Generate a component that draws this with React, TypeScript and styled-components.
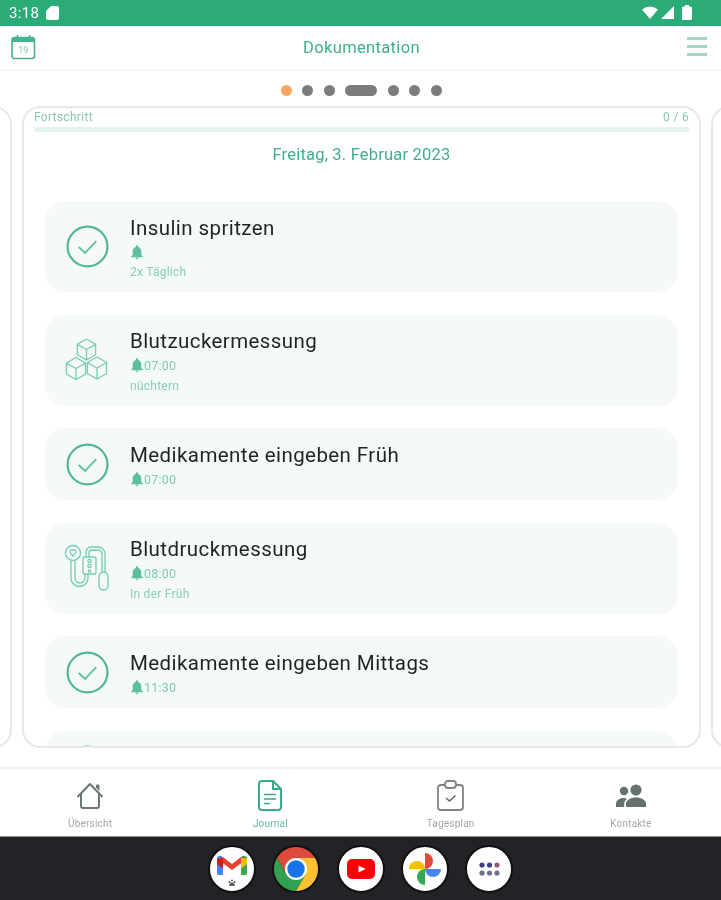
import styled, { createGlobalStyle } from 'styled-components'

const GlobalStyle = createGlobalStyle`
  html, body {
    margin: 0;
    padding: 0;
    background: #ffffff;
    font-family: Roboto, "Liberation Sans", sans-serif;
  }
`

const Page = styled.div`
  width: 721px;
  height: 900px;
  display: flex;
  flex-direction: column;
  overflow: hidden;
  background: #ffffff;
  filter: blur(0.35px);
`

const StatusBar = styled.div`
  height: 26px;
  flex-shrink: 0;
  display: flex;
  align-items: center;
  padding: 0 29px 1px 9px;
  box-sizing: border-box;
  background: #2bab78;
  color: #ffffff;
`

const Time = styled.span`
  font-size: 15px;
  letter-spacing: 0.3px;
  margin-right: 7px;
`

const StatusRight = styled.div`
  margin-left: auto;
  display: flex;
  align-items: center;
  gap: 3px;
`

const Header = styled.header`
  height: 45px;
  flex-shrink: 0;
  display: flex;
  align-items: center;
  justify-content: space-between;
  padding: 0 14px 3px 11px;
  box-sizing: border-box;
  border-bottom: 1px solid #efefef;
`

const HeaderTitle = styled.h1`
  margin: 1px 0 0;
  font-size: 16.5px;
  font-weight: 400;
  letter-spacing: 0.35px;
  color: #3fb088;
`

const Dots = styled.div`
  height: 35px;
  flex-shrink: 0;
  box-sizing: border-box;
  display: flex;
  align-items: center;
  justify-content: center;
  gap: 10.5px;
  padding: 3px 0 0 1px;
`

const Dot = styled.span<{ $active?: boolean; $wide?: boolean }>`
  width: ${({ $wide }) => ($wide ? '32px' : '11px')};
  height: 11px;
  border-radius: 6px;
  background: ${({ $active }) => ($active ? '#f6a860' : '#7c7c7c')};
`

const Carousel = styled.div`
  flex: 1;
  min-height: 0;
  display: flex;
  justify-content: center;
  gap: 10px;
  padding: 0 0 19px 2px;
`

const Card = styled.section`
  width: 679px;
  flex-shrink: 0;
  box-sizing: border-box;
  border: 2px solid #e8e8e8;
  border-radius: 18px;
  overflow: hidden;
  padding: 2px 10px 0;
  display: flex;
  flex-direction: column;
`

const ProgressHead = styled.div`
  display: flex;
  flex-shrink: 0;
  justify-content: space-between;
  font-size: 12px;
  line-height: 15px;
  letter-spacing: 0.3px;
  color: #86c9ae;
`

const ProgressBar = styled.div`
  height: 5px;
  flex-shrink: 0;
  margin-top: 2px;
  background: #e3f3ed;
`

const DateLine = styled.div`
  margin-top: 13px;
  flex-shrink: 0;
  text-align: center;
  font-size: 16.5px;
  line-height: 20px;
  letter-spacing: 0.2px;
  color: #3fb088;
`

const TaskList = styled.div`
  margin: 36px 11px 0;
  display: flex;
  flex-direction: column;
  gap: 22.5px;
`

const Task = styled.div<{ $short?: boolean }>`
  height: ${({ $short }) => ($short ? '72px' : '91px')};
  flex-shrink: 0;
  box-sizing: border-box;
  display: flex;
  border-radius: 20px;
  background: #f5f9f8;
  padding-left: 21px;
`

const TaskIcon = styled.div<{ $short?: boolean }>`
  width: 42px;
  height: ${({ $short }) => ($short ? '72px' : '91px')};
  margin-right: 22px;
  flex-shrink: 0;
  display: flex;
  align-items: center;
  justify-content: center;

  svg {
    flex-shrink: 0;
  }
`

const TaskBody = styled.div`
  display: flex;
  flex-direction: column;
  padding-top: 13.5px;
`

const TaskTitle = styled.div`
  font-size: 20.5px;
  line-height: 26px;
  letter-spacing: 0.42px;
  color: #1f2422;
`

const Reminder = styled.div`
  display: flex;
  align-items: center;
  height: 18px;
  margin-top: 2.5px;
  font-size: 12.5px;
  letter-spacing: 0.2px;
  color: #7fcbae;
`

const TaskNote = styled.div`
  margin-top: 3px;
  font-size: 12px;
  line-height: 16px;
  letter-spacing: 0.25px;
  color: #86cfb3;
`

const BottomNav = styled.nav`
  height: 70px;
  flex-shrink: 0;
  box-sizing: border-box;
  display: grid;
  grid-template-columns: repeat(4, 180.25px);
  border-top: 2px solid #efefef;
  border-bottom: 1px solid #8d8d8d;
`

const NavItem = styled.div<{ $active?: boolean }>`
  display: flex;
  flex-direction: column;
  align-items: center;
  padding-top: 10px;
  font-size: 10px;
  letter-spacing: 0.2px;
  color: ${({ $active }) => ($active ? '#64bd9b' : '#a3a6a5')};
`

const NavIconBox = styled.div`
  height: 33px;
  display: flex;
  align-items: center;
  justify-content: center;
  margin-bottom: 6px;
`

const Dock = styled.div`
  height: 63px;
  flex-shrink: 0;
  display: flex;
  align-items: center;
  justify-content: center;
  gap: 16.25px;
  background: #222326;
`

const DockIcon = styled.div`
  width: 48px;
  height: 48px;
  border-radius: 50%;
  background: #ffffff;
  border: 2px solid #111113;
  box-sizing: border-box;
  display: flex;
  align-items: center;
  justify-content: center;
`

const ChromeDisc = styled(DockIcon)`
  background: transparent;
`

const Bell = () => (
  <svg width="14" height="15" viewBox="3 2 18 21" fill="#5cc09b">
    <path d="M12 22c1.1 0 2-.9 2-2h-4c0 1.1.9 2 2 2zm6-6v-5c0-3.07-1.63-5.64-4.5-6.32V4c0-.83-.67-1.5-1.5-1.5s-1.5.67-1.5 1.5v.68C7.64 5.36 6 7.92 6 11v5l-2 2v1h16v-1l-2-2z" />
  </svg>
)

const CheckCircle = () => (
  <svg width="43" height="43" viewBox="0 0 44 44" fill="none" stroke="#4fb893" strokeWidth="2.2">
    <circle cx="22" cy="22" r="20.4" />
    <path d="M13 22.5l6.5 6 11.5-12" strokeWidth="1.9" stroke="#63c09e" />
  </svg>
)

const cube = (x: number, y: number, r: number) => {
  const h = r * 0.87
  return `M${x} ${y - r}L${x + h} ${y - r / 2}V${y + r / 2}L${x} ${y + r}L${x - h} ${y + r / 2}V${y - r / 2}ZM${x - h} ${y - r / 2}L${x} ${y}L${x + h} ${y - r / 2}M${x} ${y}V${y + r}`
}

const CubesIcon = () => (
  <svg width="44" height="42" viewBox="0 0 44 42" fill="none" stroke="#74cdab" strokeWidth="1.3" strokeLinejoin="round">
    <path d={cube(21.5, 10.5, 10.5)} />
    <path d={cube(11, 29.5, 11)} />
    <path d={cube(32, 29, 11)} />
  </svg>
)

const PressureIcon = () => (
  <svg width="46" height="50" viewBox="64 543 46 50" fill="none" stroke="#74cdab" strokeWidth="1.3">
    <circle cx="73" cy="553" r="7.5" />
    <path d="M70 552c0-3 3-3 3-1 0-2 3-2 3 1 0 2-3 3-3 4-1-1-3-2-3-4z" />
    <path d="M71 561v17a8.5 8.5 0 0 0 17 0v-4M75 561v17a5 5 0 0 0 10 0v-4" />
    <rect x="83" y="557" width="13" height="17" rx="2" />
    <circle cx="89.5" cy="561" r="1.6" />
    <circle cx="89.5" cy="566" r="1.6" />
    <circle cx="89.5" cy="571" r="1.2" />
    <path d="M86 557v-5a5 5 0 0 1 5-5h7a7 7 0 0 1 7 7v18M89 557v-4a3 3 0 0 1 3-3h6a4 4 0 0 1 4 4v18" />
    <rect x="99" y="572" width="9" height="18" rx="4.5" />
  </svg>
)

const CalendarIcon = () => (
  <svg width="25" height="26" viewBox="0 0 25 26">
    <rect x="1" y="3.5" width="22.5" height="21" rx="2.5" fill="none" stroke="#45b58c" strokeWidth="1.6" />
    <path d="M1 8V5.5a2.5 2.5 0 0 1 2.5-2.5h17.5a2.5 2.5 0 0 1 2.5 2.5V8z" fill="#45b58c" />
    <path d="M6.5 1v3M18.5 1v3" stroke="#45b58c" strokeWidth="1.5" />
    <text x="12.2" y="19" textAnchor="middle" fontSize="9" fill="#8cc3ae" fontFamily="Roboto, sans-serif">19</text>
  </svg>
)

const MenuIcon = () => (
  <svg width="20" height="19" viewBox="0 0 20 19" fill="#a3d8c4">
    <rect y="0" width="20" height="3" />
    <rect y="8" width="20" height="3" />
    <rect y="16" width="20" height="3" />
  </svg>
)

const HomeIcon = () => (
  <svg width="28" height="28" viewBox="0 0 28 28" fill="none" stroke="#6d7875" strokeWidth="2" strokeLinejoin="round">
    <path d="M1.5 15L14 2l12.5 13M5 12v12a2 2 0 0 0 2 2h14a2 2 0 0 0 2-2V12" />
    <path d="M20.5 6V3h2.5v5.5" fill="#6d7875" strokeWidth="1" />
  </svg>
)

const DocIcon = () => (
  <svg width="24" height="31" viewBox="0 0 24 31" fill="none" stroke="#38ad83" strokeWidth="2" strokeLinejoin="round">
    <path d="M4 1h11l8 8v18a3 3 0 0 1-3 3H4a3 3 0 0 1-3-3V4a3 3 0 0 1 3-3z" />
    <path d="M15 1v8h8" />
    <path d="M6 14.5h12M6 19h12M6 23.5h6" strokeWidth="1.6" />
  </svg>
)

const ClipboardIcon = () => (
  <svg width="27" height="31" viewBox="0 0 27 31" fill="none" stroke="#7d8583" strokeWidth="1.8" strokeLinejoin="round">
    <path d="M8 5H4a3 3 0 0 0-3 3v19a3 3 0 0 0 3 3h19a3 3 0 0 0 3-3V8a3 3 0 0 0-3-3h-4" />
    <rect x="8" y="1" width="11" height="7" rx="3" />
    <path d="M9 18l3.500 3 6-5.500" strokeWidth="1.6" stroke="#5f6866" />
  </svg>
)

const PeopleIcon = () => (
  <svg width="30" height="24" viewBox="0 0 30 24" fill="#64716e">
    <circle cx="8" cy="7" r="4.2" />
    <circle cx="20" cy="6" r="5.6" />
    <path d="M0 23v-3c0-3.600 3.400-6 7.500-6 1.400 0 2.500.2 3.500.7C9.200 16.200 8.200 18 8.200 20v3z" />
    <path d="M10 23v-3c0-4 4.500-6.500 10-6.500S30 16 30 20v3z" />
  </svg>
)

const SimIcon = () => (
  <svg width="13" height="14" viewBox="0 0 13 14" fill="#ffffff">
    <path d="M5 0h6a2 2 0 0 1 2 2v10a2 2 0 0 1-2 2H2a2 2 0 0 1-2-2V5z" />
  </svg>
)

const WifiIcon = () => (
  <svg width="16" height="13" viewBox="0 0 16 13" fill="#ffffff">
    <path d="M0 3.500Q8-2.500 16 3.500L8 13z" />
  </svg>
)

const SignalIcon = () => (
  <svg width="13" height="13" viewBox="0 0 13 13" fill="#ffffff">
    <path d="M13 0v13H0z" />
  </svg>
)

const BatteryIcon = () => (
  <svg width="10" height="15" viewBox="0 0 10 15" fill="#ffffff" style={{ marginLeft: 5 }}>
    <path d="M3 0h4v1.500h1.500A1.500 1.500 0 0 1 10 3v10.500A1.500 1.500 0 0 1 8.500 15h-7A1.500 1.500 0 0 1 0 13.500V3a1.500 1.500 0 0 1 1.500-1.500H3z" />
  </svg>
)

const GmailIcon = () => (
  <svg width="30" height="34" viewBox="0 0 30 34" style={{ marginTop: 6 }}>
    <path d="M0 5a3 3 0 0 1 6-2v17H2a2 2 0 0 1-2-2z" fill="#4285f4" />
    <path d="M30 5a3 3 0 0 0-6-2v17h4a2 2 0 0 0 2-2z" fill="#34a853" />
    <path d="M0 4l15 11L30 4l-6-2-9 7L6 2z" fill="#ea4335" />
    <path d="M24 3l6 .5V9l-6 4.500z" fill="#fbbc04" />
    <path d="M0 4v5l6 4.500V3z" fill="#c5221f" />
    <g fill="#5a5e5d">
      <circle cx="15" cy="25.500" r="1" />
      <circle cx="12.500" cy="27" r="1" />
      <circle cx="17.500" cy="27" r="1" />
      <path d="M15 27.500c-1.500 0-2.800 1.300-2.800 2.400s1.300 1.100 2.800 1.100 2.800 0 2.800-1.100-1.300-2.400-2.800-2.400z" />
    </g>
  </svg>
)

const ChromeIcon = () => (
  <svg width="44" height="44" viewBox="0 0 48 48">
    <path d="M44.780 12A24 24 0 0 0 3.220 12L13.600 30L24 24V12z" fill="#dd4b3e" />
    <path d="M3.220 12A24 24 0 0 0 24 48L34.400 30L24 24L13.600 30z" fill="#2fa14f" />
    <path d="M24 48A24 24 0 0 0 44.780 12H24V24L34.400 30z" fill="#fcc230" />
    <circle cx="24" cy="24" r="12" fill="#ffffff" />
    <circle cx="24" cy="24" r="9.500" fill="#1a73e8" />
  </svg>
)

const YoutubeIcon = () => (
  <svg width="28" height="20" viewBox="0 0 28 20">
    <rect width="28" height="20" rx="5" fill="#fb0007" />
    <path d="M11.500 6.500l7 3.500-7 3.500z" fill="#ffffff" />
  </svg>
)

const PhotosIcon = () => (
  <svg width="32" height="32" viewBox="0 0 32 32">
    <path d="M16 16V0A8 8 0 0 1 16 16z" fill="#dd4b3a" />
    <path d="M16 16H32A8 8 0 0 1 16 16z" fill="#4a86e8" />
    <path d="M16 16V32A8 8 0 0 1 16 16z" fill="#34a853" />
    <path d="M16 16H0A8 8 0 0 1 16 16z" fill="#fbbc04" />
  </svg>
)

const AppsIcon = () => (
  <svg width="21" height="14" viewBox="0 0 21 14">
    <circle cx="3" cy="3" r="2.600" fill="#3b3f8c" />
    <circle cx="10.500" cy="3" r="2.600" fill="#3b3f8c" />
    <circle cx="18" cy="3" r="2.600" fill="#8d5f7d" />
    <circle cx="3" cy="11" r="2.600" fill="#6f6d88" />
    <circle cx="10.500" cy="11" r="2.600" fill="#6f6d88" />
    <circle cx="18" cy="11" r="2.600" fill="#6f6d88" />
  </svg>
)

type TaskEntry = {
  title: string,
  time?: string,
  note?: string,
  icon: 'check' | 'cubes' | 'pressure',
}

const tasks: TaskEntry[] = [
  { title: 'Insulin spritzen', note: '2x Täglich', icon: 'check' },
  { title: 'Blutzuckermessung', time: '07:00', note: 'nüchtern', icon: 'cubes' },
  { title: 'Medikamente eingeben Früh', time: '07:00', icon: 'check' },
  { title: 'Blutdruckmessung', time: '08:00', note: 'In der Früh', icon: 'pressure' },
  { title: 'Medikamente eingeben Mittags', time: '11:30', icon: 'check' },
  { title: 'Medikamente eingeben Abends', time: '18:00', icon: 'check' },
]

const taskIcons = {
  check: <CheckCircle />,
  cubes: <CubesIcon />,
  pressure: <PressureIcon />,
}

const App = () => {
  return (
    <Page>
      <GlobalStyle />
      <StatusBar>
        <Time>3:18</Time>
        <SimIcon />
        <StatusRight>
          <WifiIcon />
          <SignalIcon />
          <BatteryIcon />
        </StatusRight>
      </StatusBar>
      <Header>
        <CalendarIcon />
        <HeaderTitle>Dokumentation</HeaderTitle>
        <MenuIcon />
      </Header>
      <Dots>
        <Dot $active />
        <Dot />
        <Dot />
        <Dot $wide />
        <Dot />
        <Dot />
        <Dot />
      </Dots>
      <Carousel>
        <Card />
        <Card>
          <ProgressHead>
            <span>Fortschritt</span>
            <span>0 / 6</span>
          </ProgressHead>
          <ProgressBar />
          <DateLine>Freitag, 3. Februar 2023</DateLine>
          <TaskList>
            {tasks.map((task) => (
              <Task key={task.title} $short={!task.note}>
                <TaskIcon $short={!task.note}>{taskIcons[task.icon]}</TaskIcon>
                <TaskBody>
                  <TaskTitle>{task.title}</TaskTitle>
                  <Reminder>
                    <Bell />
                    {task.time}
                  </Reminder>
                  {task.note && <TaskNote>{task.note}</TaskNote>}
                </TaskBody>
              </Task>
            ))}
          </TaskList>
        </Card>
        <Card />
      </Carousel>
      <BottomNav>
        <NavItem>
          <NavIconBox><HomeIcon /></NavIconBox>
          Übersicht
        </NavItem>
        <NavItem $active>
          <NavIconBox><DocIcon /></NavIconBox>
          Journal
        </NavItem>
        <NavItem>
          <NavIconBox><ClipboardIcon /></NavIconBox>
          Tagesplan
        </NavItem>
        <NavItem>
          <NavIconBox><PeopleIcon /></NavIconBox>
          Kontakte
        </NavItem>
      </BottomNav>
      <Dock>
        <DockIcon><GmailIcon /></DockIcon>
        <ChromeDisc><ChromeIcon /></ChromeDisc>
        <DockIcon><YoutubeIcon /></DockIcon>
        <DockIcon><PhotosIcon /></DockIcon>
        <DockIcon><AppsIcon /></DockIcon>
      </Dock>
    </Page>
  )
}

export default App
